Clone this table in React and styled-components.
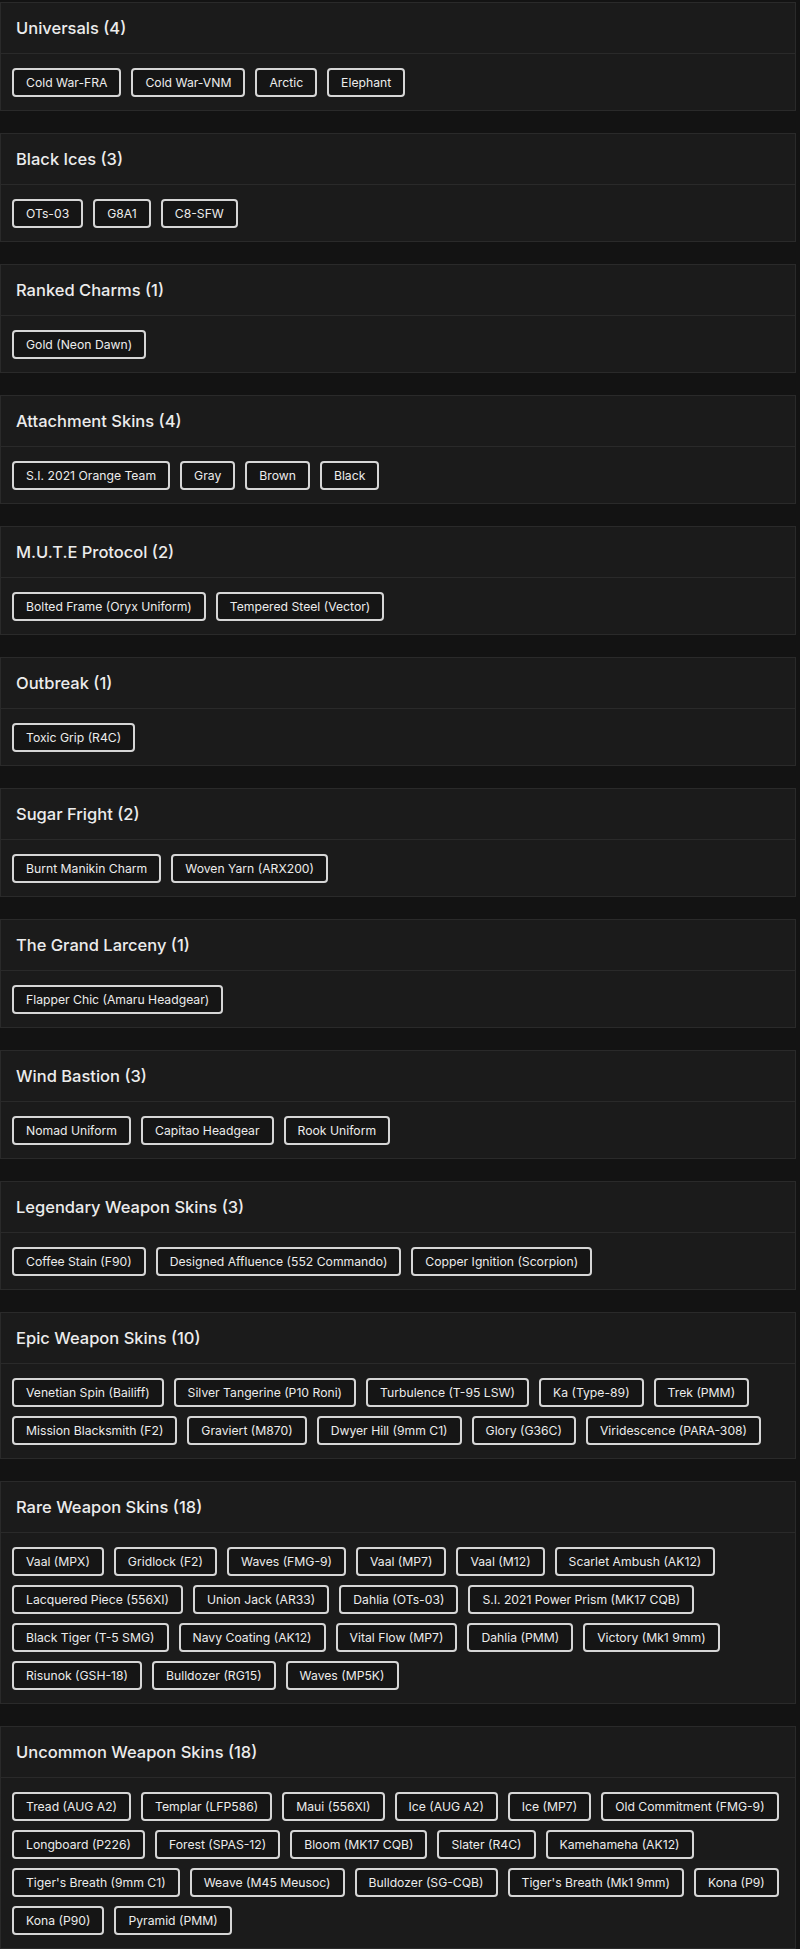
import React from "react";
import styled, { createGlobalStyle } from "styled-components";

const Global = createGlobalStyle`
  html, body { margin: 0; padding: 0; background: #131313; }
  body { font-family: Inter, "Open Sans", sans-serif; color: #e6e6e6; }
`;

const Page = styled.div`
  display: flex;
  flex-direction: column;
  gap: 22px;
  padding: 2px 4px 0 0;
`;

const Card = styled.section`
  background: #1b1b1b;
  border: 1px solid #2a2a2a;
`;

const Header = styled.header`
  height: 50px;
  display: flex;
  align-items: center;
  padding: 0 15px;
  border-bottom: 1px solid #2a2a2a;
`;

const Title = styled.h2`
  margin: 0;
  font-size: 16.5px;
  font-weight: 500;
  color: #ececec;
`;

const Body = styled.div`
  display: flex;
  flex-wrap: wrap;
  gap: 9px 10px;
  padding: 14px 4px 13px 11px;
`;

const Chip = styled.span`
  box-sizing: border-box;
  height: 29px;
  display: inline-flex;
  align-items: center;
  padding: 0 12px;
  border: 2px solid #d6d6d6;
  border-radius: 4px;
  background: #151515;
  color: #ececec;
  font-size: 12.2px;
  white-space: nowrap;
`;

const data = [
  ["Universals", ["Cold War-FRA", "Cold War-VNM", "Arctic", "Elephant"]],
  ["Black Ices", ["OTs-03", "G8A1", "C8-SFW"]],
  ["Ranked Charms", ["Gold (Neon Dawn)"]],
  ["Attachment Skins", ["S.I. 2021 Orange Team", "Gray", "Brown", "Black"]],
  ["M.U.T.E Protocol", ["Bolted Frame (Oryx Uniform)", "Tempered Steel (Vector)"]],
  ["Outbreak", ["Toxic Grip (R4C)"]],
  ["Sugar Fright", ["Burnt Manikin Charm", "Woven Yarn (ARX200)"]],
  ["The Grand Larceny", ["Flapper Chic (Amaru Headgear)"]],
  ["Wind Bastion", ["Nomad Uniform", "Capitao Headgear", "Rook Uniform"]],
  ["Legendary Weapon Skins", ["Coffee Stain (F90)", "Designed Affluence (552 Commando)", "Copper Ignition (Scorpion)"]],
  ["Epic Weapon Skins", ["Venetian Spin (Bailiff)", "Silver Tangerine (P10 Roni)", "Turbulence (T-95 LSW)", "Ka (Type-89)", "Trek (PMM)", "Mission Blacksmith (F2)", "Graviert (M870)", "Dwyer Hill (9mm C1)", "Glory (G36C)", "Viridescence (PARA-308)"]],
  ["Rare Weapon Skins", ["Vaal (MPX)", "Gridlock (F2)", "Waves (FMG-9)", "Vaal (MP7)", "Vaal (M12)", "Scarlet Ambush (AK12)", "Lacquered Piece (556XI)", "Union Jack (AR33)", "Dahlia (OTs-03)", "S.I. 2021 Power Prism (MK17 CQB)", "Black Tiger (T-5 SMG)", "Navy Coating (AK12)", "Vital Flow (MP7)", "Dahlia (PMM)", "Victory (Mk1 9mm)", "Risunok (GSH-18)", "Bulldozer (RG15)", "Waves (MP5K)"]],
  ["Uncommon Weapon Skins", ["Tread (AUG A2)", "Templar (LFP586)", "Maui (556XI)", "Ice (AUG A2)", "Ice (MP7)", "Old Commitment (FMG-9)", "Longboard (P226)", "Forest (SPAS-12)", "Bloom (MK17 CQB)", "Slater (R4C)", "Kamehameha (AK12)", "Tiger's Breath (9mm C1)", "Weave (M45 Meusoc)", "Bulldozer (SG-CQB)", "Tiger's Breath (Mk1 9mm)", "Kona (P9)", "Kona (P90)", "Pyramid (PMM)"]],
];

export default function App() {
  return (
    <>
      <Global />
      <Page>
        {data.map(([title, items]) => (
          <Card key={title}>
            <Header>
              <Title>{title} ({items.length})</Title>
            </Header>
            <Body>
              {items.map((it, i) => (
                <Chip key={i}>{it}</Chip>
              ))}
            </Body>
          </Card>
        ))}
      </Page>
    </>
  );
}
